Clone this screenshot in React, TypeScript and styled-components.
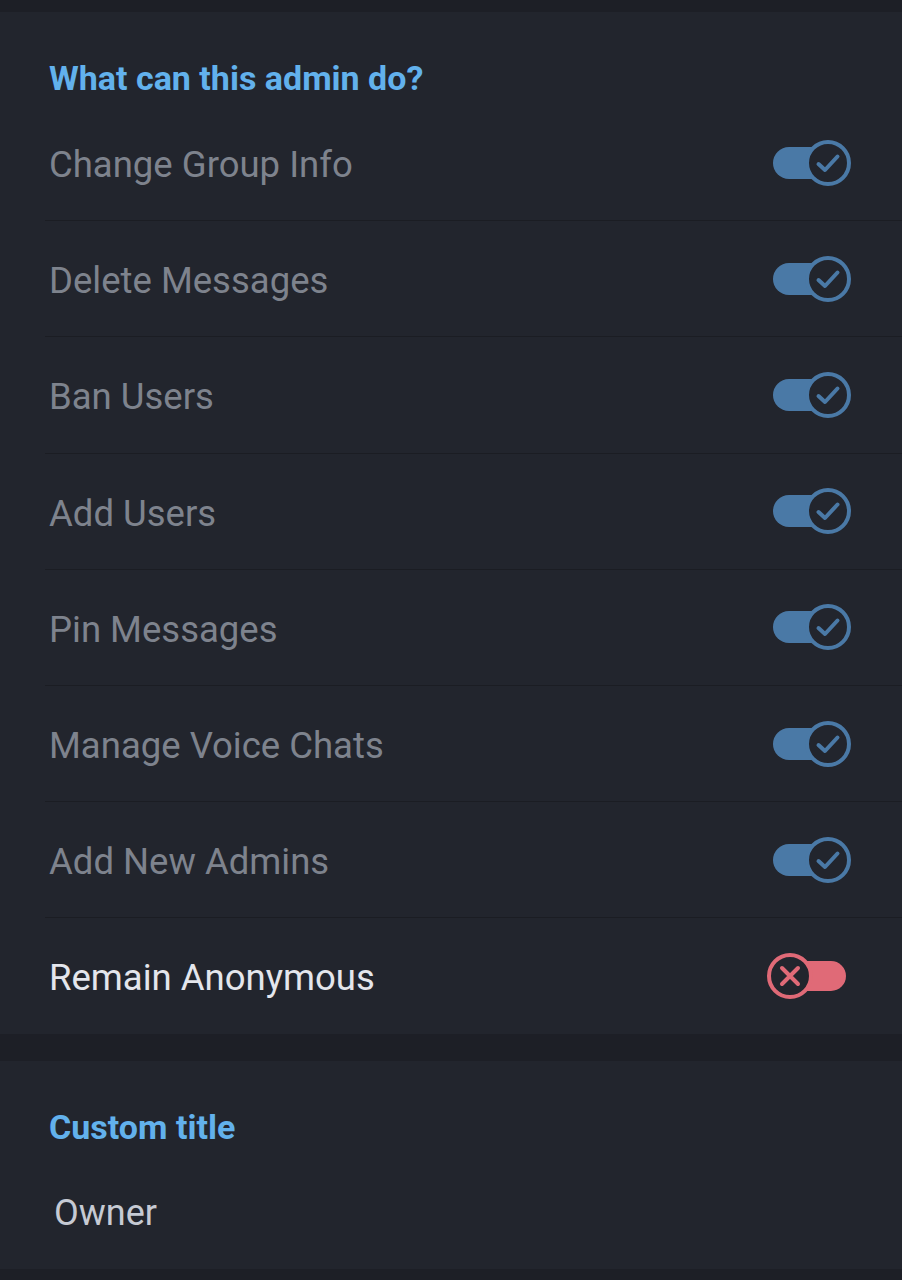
import React from "react";
import styled, { createGlobalStyle } from "styled-components";

const Global = createGlobalStyle`
  html, body { margin: 0; padding: 0; background: #1d1f26; }
  body { font-family: Roboto, "Noto Sans", sans-serif; -webkit-font-smoothing: antialiased; }
`;

const Page = styled.div`
  display: flex;
  flex-direction: column;
  padding: 12px 0;
  gap: 27px;
  background: #1d1f26;
`;

const Section = styled.section`
  background: #22252d;
  display: flex;
  flex-direction: column;
`;

const Header = styled.h2<{ $bottom: number }>`
  margin: 0;
  padding: 46px 0 ${(p) => p.$bottom}px 49px;
  font-size: 34px;
  line-height: 40px;
  font-weight: 700;
  color: #62b1ec;
`;

const Row = styled.div<{ $last?: boolean }>`
  display: flex;
  align-items: center;
  justify-content: space-between;
  height: 115.2px;
  margin-left: 45px;
  padding: 0 51px 0 4px;
  border-bottom: ${(p) => (p.$last ? "none" : "1px solid #1b1d23")};
  box-sizing: content-box;
`;

const Label = styled.span<{ $active?: boolean }>`
  font-size: 36.5px;
  line-height: 40px;
  padding-top: 5px;
  color: ${(p) => (p.$active ? "#e4e6ec" : "#7e838d")};
`;

const Value = styled.div`
  margin: 46px 0 36px 54px;
  font-size: 36px;
  line-height: 40px;
  color: #c6cad3;
`;

const SwitchBox = styled.div`
  position: relative;
  width: 84px;
  height: 46px;
  flex-shrink: 0;
`;

const Track = styled.div<{ $on: boolean }>`
  position: absolute;
  top: ${(p) => (p.$on ? "7px" : "8px")};
  left: ${(p) => (p.$on ? "6px" : "18px")};
  width: ${(p) => (p.$on ? "60px" : "61px")};
  height: ${(p) => (p.$on ? "32px" : "30px")};
  border-radius: 16px;
  background: ${(p) => (p.$on ? "#4a79a6" : "#e06a77")};
`;

const Knob = styled.div<{ $on: boolean }>`
  position: absolute;
  top: 0;
  ${(p) => (p.$on ? "right: 0;" : "left: 0;")}
  width: 46px;
  height: 46px;
  box-sizing: border-box;
  border-radius: 50%;
  background: #22252d;
  border: 4px solid ${(p) => (p.$on ? "#4a79a6" : "#e06a77")};
  display: flex;
  align-items: center;
  justify-content: center;
`;

function Switch({ on }: { on: boolean }) {
  const color = on ? "#4a79a6" : "#e06a77";
  return (
    <SwitchBox>
      <Track $on={on} />
      <Knob $on={on}>
        {on ? (
          <svg width="30" height="30" viewBox="0 0 30 30">
            <path d="M5.5 16 L12 22 L24.5 8.5" fill="none" stroke={color} strokeWidth="4" strokeLinecap="round" strokeLinejoin="round" />
          </svg>
        ) : (
          <svg width="28" height="28" viewBox="0 0 28 28">
            <path d="M6 6 L22 22 M22 6 L6 22" fill="none" stroke={color} strokeWidth="4" strokeLinecap="round" />
          </svg>
        )}
      </Knob>
    </SwitchBox>
  );
}

const perms: { label: string; on: boolean; active?: boolean }[] = [
  { label: "Change Group Info", on: true },
  { label: "Delete Messages", on: true },
  { label: "Ban Users", on: true },
  { label: "Add Users", on: true },
  { label: "Pin Messages", on: true },
  { label: "Manage Voice Chats", on: true },
  { label: "Add New Admins", on: true },
  { label: "Remain Anonymous", on: false, active: true },
];

export default function App() {
  return (
    <>
      <Global />
      <Page>
        <Section>
          <Header $bottom={7}>What can this admin do?</Header>
          {perms.map((p, i) => (
            <Row key={p.label} $last={i === perms.length - 1}>
              <Label $active={p.active}>{p.label}</Label>
              <Switch on={p.on} />
            </Row>
          ))}
        </Section>
        <Section>
          <Header $bottom={0}>Custom title</Header>
          <Value>Owner</Value>
        </Section>
      </Page>
    </>
  );
}
